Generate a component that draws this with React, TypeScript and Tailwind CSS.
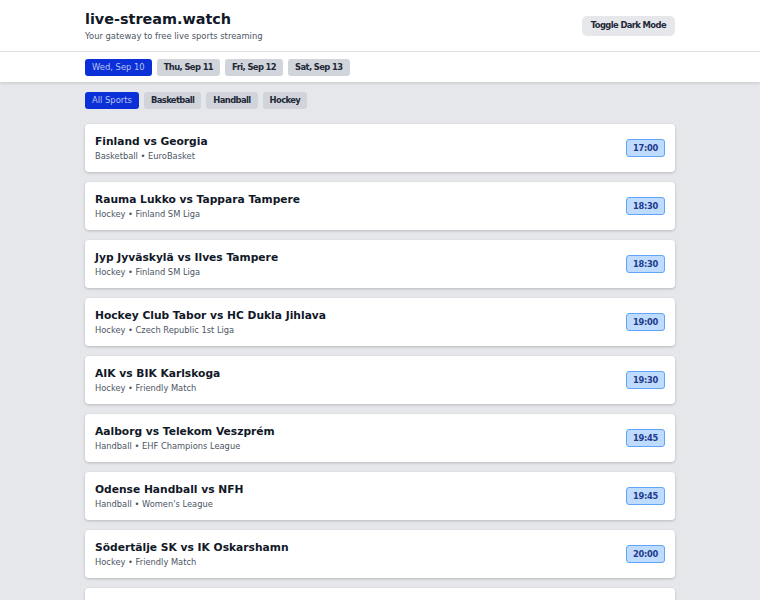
const dates = ["Wed, Sep 10", "Thu, Sep 11", "Fri, Sep 12", "Sat, Sep 13"];
const sports = ["All Sports", "Basketball", "Handball", "Hockey"];

const matches = [
  { title: "Finland vs Georgia", sport: "Basketball", league: "EuroBasket", time: "17:00" },
  { title: "Rauma Lukko vs Tappara Tampere", sport: "Hockey", league: "Finland SM Liga", time: "18:30" },
  { title: "Jyp Jyväskylä vs Ilves Tampere", sport: "Hockey", league: "Finland SM Liga", time: "18:30" },
  { title: "Hockey Club Tabor vs HC Dukla Jihlava", sport: "Hockey", league: "Czech Republic 1st Liga", time: "19:00" },
  { title: "AIK vs BIK Karlskoga", sport: "Hockey", league: "Friendly Match", time: "19:30" },
  { title: "Aalborg vs Telekom Veszprém", sport: "Handball", league: "EHF Champions League", time: "19:45" },
  { title: "Odense Handball vs NFH", sport: "Handball", league: "Women's League", time: "19:45" },
  { title: "Södertälje SK vs IK Oskarshamn", sport: "Hockey", league: "Friendly Match", time: "20:00" },
  { title: "Färjestad BK vs Frölunda HC", sport: "Hockey", league: "Friendly Match", time: "20:00" },
];

function Pill({ label, active }: { label: string; active: boolean }) {
  return (
    <button
      className={
        active
          ? "h-[17px] px-[7px] rounded-[3px] bg-[#0b30d8] text-[8.4px] text-[#b9c4f2] leading-none"
          : "h-[17px] px-[7px] rounded-[3px] bg-[#d1d5db] text-[8.4px] font-semibold tracking-[-0.6px] text-[#1f2937] leading-none"
      }
    >
      {label}
    </button>
  );
}

export default function App() {
  return (
    <div className="h-screen overflow-hidden bg-[#e5e7eb] font-['DejaVu_Sans',sans-serif] text-[#111827]">
      <header className="bg-white border-b border-[#e5e7eb]">
        <div className="max-w-[590px] mx-auto h-[51px] flex items-center justify-between">
          <div>
            <h1 className="text-[14.4px] font-bold leading-[18px] mt-[1px]">live-stream.watch</h1>
            <p className="text-[8.4px] text-[#4b5563] leading-[11px] mt-[3px]">Your gateway to free live sports streaming</p>
          </div>
          <button className="h-[20px] px-[9px] rounded-[5px] bg-[#e5e7eb] text-[8.4px] font-semibold tracking-[-0.6px] text-[#1f2937]">
            Toggle Dark Mode
          </button>
        </div>
      </header>

      <nav className="bg-white shadow-[0_1px_3px_rgba(0,0,0,0.15)]">
        <div className="max-w-[590px] mx-auto h-[30px] flex items-center gap-[5px]">
          {dates.map((d, i) => (
            <Pill key={d} label={d} active={i === 0} />
          ))}
        </div>
      </nav>

      <main className="max-w-[590px] mx-auto pt-[10px] pb-6">
        <div className="flex gap-[5px] mb-[15px]">
          {sports.map((s, i) => (
            <Pill key={s} label={s} active={i === 0} />
          ))}
        </div>
        <div className="flex flex-col gap-[10px]">
          {matches.map((m) => (
            <div
              key={m.title}
              className="bg-white rounded-[4px] shadow-[0_1px_3px_rgba(0,0,0,0.2)] h-[48px] px-[10px] flex items-center justify-between"
            >
              <div className="pt-[1px]">
                <div className="text-[10.7px] font-bold leading-[14px]">{m.title}</div>
                <div className="text-[8.3px] text-[#4b5563] leading-[12px] mt-[1px]">
                  {m.sport} • {m.league}
                </div>
              </div>
              <span className="h-[18px] w-[39px] flex items-center justify-center rounded-[3px] bg-[#bfdbfe] border border-[#60a5fa] text-[8.3px] font-bold tracking-[-0.3px] text-[#1e3a8a]">
                {m.time}
              </span>
            </div>
          ))}
        </div>
      </main>
    </div>
  );
}
